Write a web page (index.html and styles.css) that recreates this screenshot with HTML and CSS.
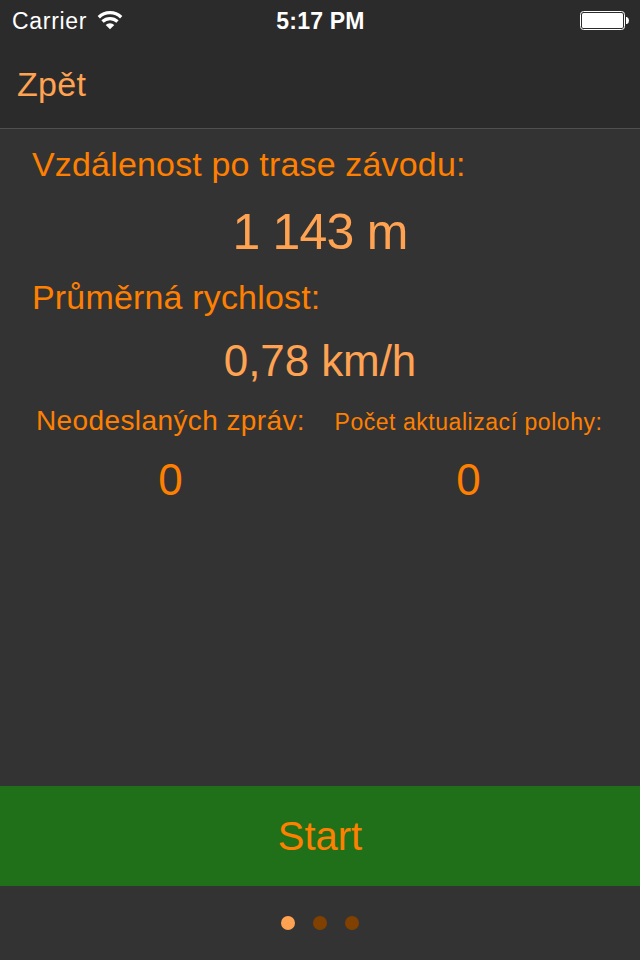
FILE: index.html
```html
<!DOCTYPE html>
<html lang="cs">
<head>
	<meta charset="UTF-8">
	<title>Závod</title>
	<link rel="stylesheet" href="styles.css">
</head>
<body>
	<div class="screen">
		<div class="header">
			<div class="status">
				<div class="carrier">
					<span class="carrier-name">Carrier</span>
					<svg class="wifi" width="26" height="20" viewBox="0 0 26 20">
						<path d="M1.8 7.2 A16.2 16.2 0 0 1 24.2 7.2" />
						<path d="M5.5 11.5 A11 11 0 0 1 20.5 11.5" />
						<path class="wifi-dot" d="M13 19.2 L8.7 14.9 A6.2 6.2 0 0 1 17.3 14.9 Z" />
					</svg>
				</div>
				<span class="time">5:17 PM</span>
				<svg class="battery" width="49" height="20" viewBox="0 0 49 20">
					<rect x="0.5" y="0.5" width="44" height="18" rx="3" fill="none" stroke="#fff" />
					<rect x="2" y="2" width="41" height="15" rx="1.5" fill="#fff" />
					<path d="M46 6 H47 Q49 7 49 9.5 T47 13 H46 Z" fill="#fff" />
				</svg>
			</div>
			<div class="nav"><span class="back">Zpět</span></div>
		</div>
		<div class="content">
			<div class="label distance-label"><span>Vzdálenost po trase závodu:</span></div>
			<div class="value distance"><span>1 143 m</span></div>
			<div class="label speed-label"><span>Průměrná rychlost:</span></div>
			<div class="value speed"><span>0,78 km/h</span></div>
			<div class="counters">
				<div class="counter">
					<div class="counter-label unsent"><span>Neodeslaných zpráv:</span></div>
					<div class="counter-value">0</div>
				</div>
				<div class="counter">
					<div class="counter-label updates"><span>Počet aktualizací polohy:</span></div>
					<div class="counter-value">0</div>
				</div>
			</div>
		</div>
		<div class="start"><span>Start</span></div>
		<ul class="dots">
			<li class="dot active"></li>
			<li class="dot"></li>
			<li class="dot"></li>
		</ul>
	</div>
</body>
</html>
```

FILE: styles.css
```css
*{
	margin: 0;
	padding: 0;
	box-sizing: border-box;
}
ul{
	list-style: none;
}
.screen{
	display: flex;
	flex-direction: column;
	width: 640px;
	height: 960px;
	overflow: hidden;
	background-color: #333;
	color: #ff8000;
	font-family: "Liberation Sans", Arial, sans-serif;
	white-space: nowrap;
}
.header{
	height: 129px;
	background-color: #2b2b2b;
	border-bottom: 1px solid #505050;
}
.status{
	display: grid;
	grid-template-columns: 1fr auto 1fr;
	align-items: center;
	height: 42px;
	padding: 0 11px 0 12px;
	color: #fff;
	font-size: 23px;
}
.carrier{
	display: flex;
	align-items: center;
	gap: 10px;
}
.carrier-name{
	letter-spacing: .7px;
}
.wifi{
	margin-top: -2px;
	fill: none;
	stroke: #fff;
	stroke-width: 3.3;
}
.wifi .wifi-dot{
	fill: #fff;
	stroke: none;
}
.time{
	font-weight: bold;
	letter-spacing: .2px;
}
.battery{
	justify-self: end;
}
.nav{
	display: flex;
	align-items: center;
	height: 84px;
	padding-left: 17px;
	color: #ffa352;
	font-size: 34px;
	letter-spacing: .3px;
}
.content{
	height: 657px;
	padding-top: 14px;
}
.label{
	height: 42px;
	padding-left: 32px;
	font-size: 34px;
	line-height: 42px;
	letter-spacing: .17px;
}
.value{
	color: #ffa352;
	text-align: center;
}
.distance{
	height: 91px;
	font-size: 50px;
	line-height: 95px;
	letter-spacing: -.8px;
}
.speed{
	height: 85px;
	font-size: 44px;
	line-height: 86px;
	letter-spacing: -.1px;
}
.counters{
	display: grid;
	grid-template-columns: 277px 269px;
	gap: 25px;
	padding-left: 32px;
	text-align: center;
}
.counter-label{
	height: 36px;
	line-height: 36px;
}
.unsent{
	font-size: 28px;
	letter-spacing: .4px;
}
.updates{
	font-size: 23px;
	line-height: 38px;
	letter-spacing: .54px;
}
.counter-value{
	height: 80px;
	font-size: 44px;
	line-height: 82px;
}
.start{
	height: 100px;
	background-color: #1f7018;
	font-size: 40px;
	line-height: 100px;
	text-align: center;
}
.dots{
	display: flex;
	justify-content: center;
	gap: 18px;
	padding-top: 30px;
}
.dot{
	width: 14px;
	height: 14px;
	border-radius: 50%;
	background-color: #804000;
}
.dot.active{
	background-color: #ffa352;
}
```
